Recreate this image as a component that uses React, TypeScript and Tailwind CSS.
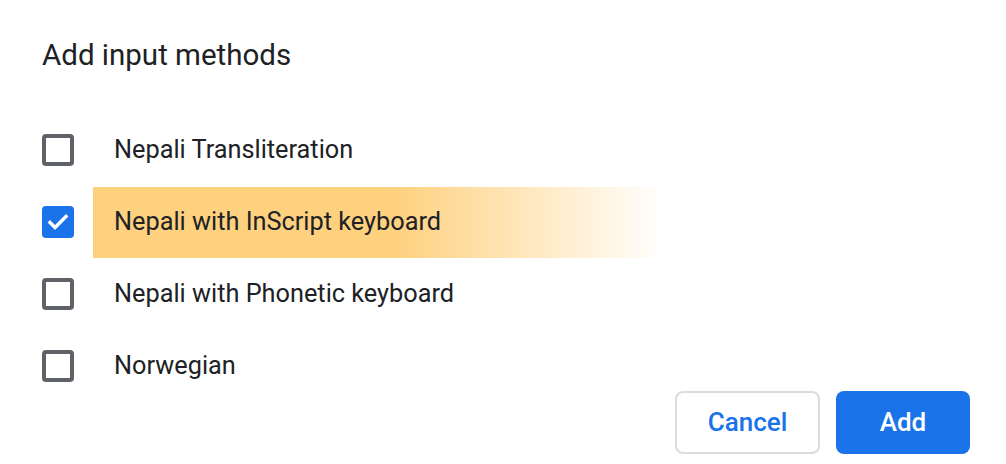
import React, { useState } from 'react';

const items = [
  'Nepali Transliteration',
  'Nepali with InScript keyboard',
  'Nepali with Phonetic keyboard',
  'Norwegian',
];

function Checkbox({ checked }: { checked: boolean }) {
  if (checked) {
    return (
      <div className="w-8 h-8 rounded-[4px] bg-[#1a73e8] flex items-center justify-center shrink-0">
        <svg width="24" height="24" viewBox="0 0 24 24">
          <path d="M4 12.5l5 5L20 6.5" fill="none" stroke="#ffffff" strokeWidth="3.4" strokeLinecap="square" />
        </svg>
      </div>
    );
  }
  return <div className="w-8 h-8 rounded-[4px] border-[4px] border-[#5f6368] shrink-0" />;
}

export default function App() {
  const [selected, setSelected] = useState<string[]>(['Nepali with InScript keyboard']);

  const toggle = (name: string) =>
    setSelected(s => (s.includes(name) ? s.filter(x => x !== name) : [...s, name]));

  return (
    <div className="w-[1006px] h-[464px] bg-white overflow-hidden" style={{ fontFamily: 'Roboto, "Noto Sans", sans-serif' }}>
      <div className="pl-[42px] pt-[36px]">
        <h2 className="text-[29.5px] leading-[38px] text-[#202124]">Add input methods</h2>
      </div>

      <div className="mt-[40px] flex flex-col">
        {items.map(name => {
          const isChecked = selected.includes(name);
          const highlight = name === 'Nepali with InScript keyboard';
          return (
            <div key={name} className="flex items-center h-[72px] cursor-pointer" onClick={() => toggle(name)}>
              <div className="w-[93px] pl-[42px] flex items-center">
                <Checkbox checked={isChecked} />
              </div>
              <div
                className={
                  highlight
                    ? 'h-[71px] w-[570px] flex items-center pl-[21px] bg-[linear-gradient(to_right,#fed17f_0%,#fed17f_53%,#ffffff_100%)]'
                    : 'h-[71px] flex items-center pl-[21px]'
                }
              >
                <span className="text-[25.3px] text-[#202124]">{name}</span>
              </div>
            </div>
          );
        })}
      </div>

      <div className="flex justify-end gap-4 pr-[36px] -mt-[11px]">
        <button className="w-[145px] h-[63px] rounded-[8px] border-2 border-[#dadce0] bg-white text-[#1a73e8] text-[26px] font-medium">
          Cancel
        </button>
        <button className="w-[134px] h-[63px] rounded-[8px] bg-[#1a73e8] text-white text-[26px] font-medium">
          Add
        </button>
      </div>
    </div>
  );
}
